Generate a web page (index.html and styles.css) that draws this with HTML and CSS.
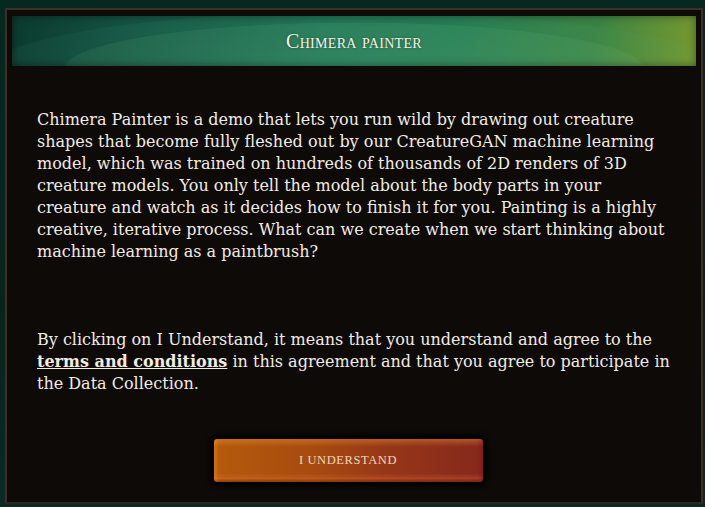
FILE: index.html
```html
<!DOCTYPE html>
<html>
<head>
<meta charset="utf-8">
<link rel="stylesheet" href="styles.css">
</head>
<body>
<div class="panel">
  <div class="banner">
    <h1 class="title">Chimera painter</h1>
  </div>
  <div class="content">
    <p class="para">Chimera Painter is a demo that lets you run wild by drawing out creature shapes that become fully fleshed out by our CreatureGAN machine learning model, which was trained on hundreds of thousands of 2D renders of 3D creature models. You only tell the model about the body parts in your creature and watch as it decides how to finish it for you. Painting is a highly creative, iterative process. What can we create when we start thinking about machine learning as a paintbrush?</p>
    <p class="para para-terms">By clicking on I Understand, it means that you understand and agree to the <a class="terms" href="#">terms and conditions</a> in this agreement and that you agree to participate in the Data Collection.</p>
    <div class="actions">
      <button class="btn">I understand</button>
    </div>
  </div>
</div>
</body>
</html>
```

FILE: styles.css
```css
html, body {
  margin: 0;
  padding: 0;
}
body {
  width: 705px;
  height: 507px;
  background: linear-gradient(180deg, #062820 0%, #07231c 60%, #0a2a22 100%);
  font-family: "DejaVu Serif", "Liberation Serif", serif;
  overflow: hidden;
}
.panel {
  margin: 8px 2px 0 5px;
  height: 496px;
  box-sizing: border-box;
  border: 2px solid #3a3028;
  border-bottom-color: #2c2620;
  background: #0e0a07;
  padding: 6px 5px 0 5px;
}
.banner {
  height: 50px;
  border-radius: 1px;
  background:
    radial-gradient(ellipse 60% 130% at 50% 105%, rgba(120,200,140,0.16) 0%, rgba(120,200,140,0.10) 70%, rgba(0,0,0,0) 71%),
    radial-gradient(ellipse 75% 170% at 50% 115%, rgba(80,170,120,0.10) 0%, rgba(80,170,120,0.08) 72%, rgba(0,0,0,0) 73%),
    linear-gradient(100deg, #0b3a2f 0%, #145544 18%, #1e7255 45%, #247a52 65%, #3c8444 85%, #78992f 100%);
  box-shadow: inset 0 0 8px rgba(0,0,0,0.45);
  display: flex;
  align-items: center;
  justify-content: center;
}
.title {
  margin: 0;
  font-family: "Liberation Serif", serif;
  font-weight: normal;
  font-size: 20px;
  font-variant: small-caps;
  color: #f4f0e4;
  letter-spacing: 0.3px;
  text-shadow: 0 0 3px rgba(0,0,0,0.4);
}
.content {
  padding: 43px 25px 0 25px;
}
.para {
  margin: 0;
  font-size: 16px;
  line-height: 22px;
  color: #f1ece2;
}
.para-terms {
  margin-top: 66px;
}
.terms {
  color: #f1ece2;
  font-weight: bold;
  text-decoration: underline;
}
.actions {
  display: flex;
  justify-content: center;
  margin-top: 42px;
  padding-right: 12px;
}
.btn {
  width: 273px;
  height: 47px;
  border: 2px solid #050302;
  border-radius: 5px;
  background:
    linear-gradient(180deg, rgba(255,170,60,0.35) 0%, rgba(255,140,40,0) 18%, rgba(0,0,0,0) 80%, rgba(255,120,60,0.25) 92%, rgba(0,0,0,0.3) 100%),
    linear-gradient(90deg, #b45a0c 0%, #a84c10 35%, #963618 65%, #85281c 100%);
  box-shadow: 0 0 4px 2px rgba(0,0,0,0.9), inset 3px 0 3px rgba(255,150,40,0.35), inset -3px 0 3px rgba(120,20,20,0.4);
  font-family: "Liberation Serif", serif;
  text-transform: uppercase;
  font-size: 12.5px;
  color: #f2d9b8;
  letter-spacing: 0.6px;
  cursor: pointer;
  padding: 0;
}
```
